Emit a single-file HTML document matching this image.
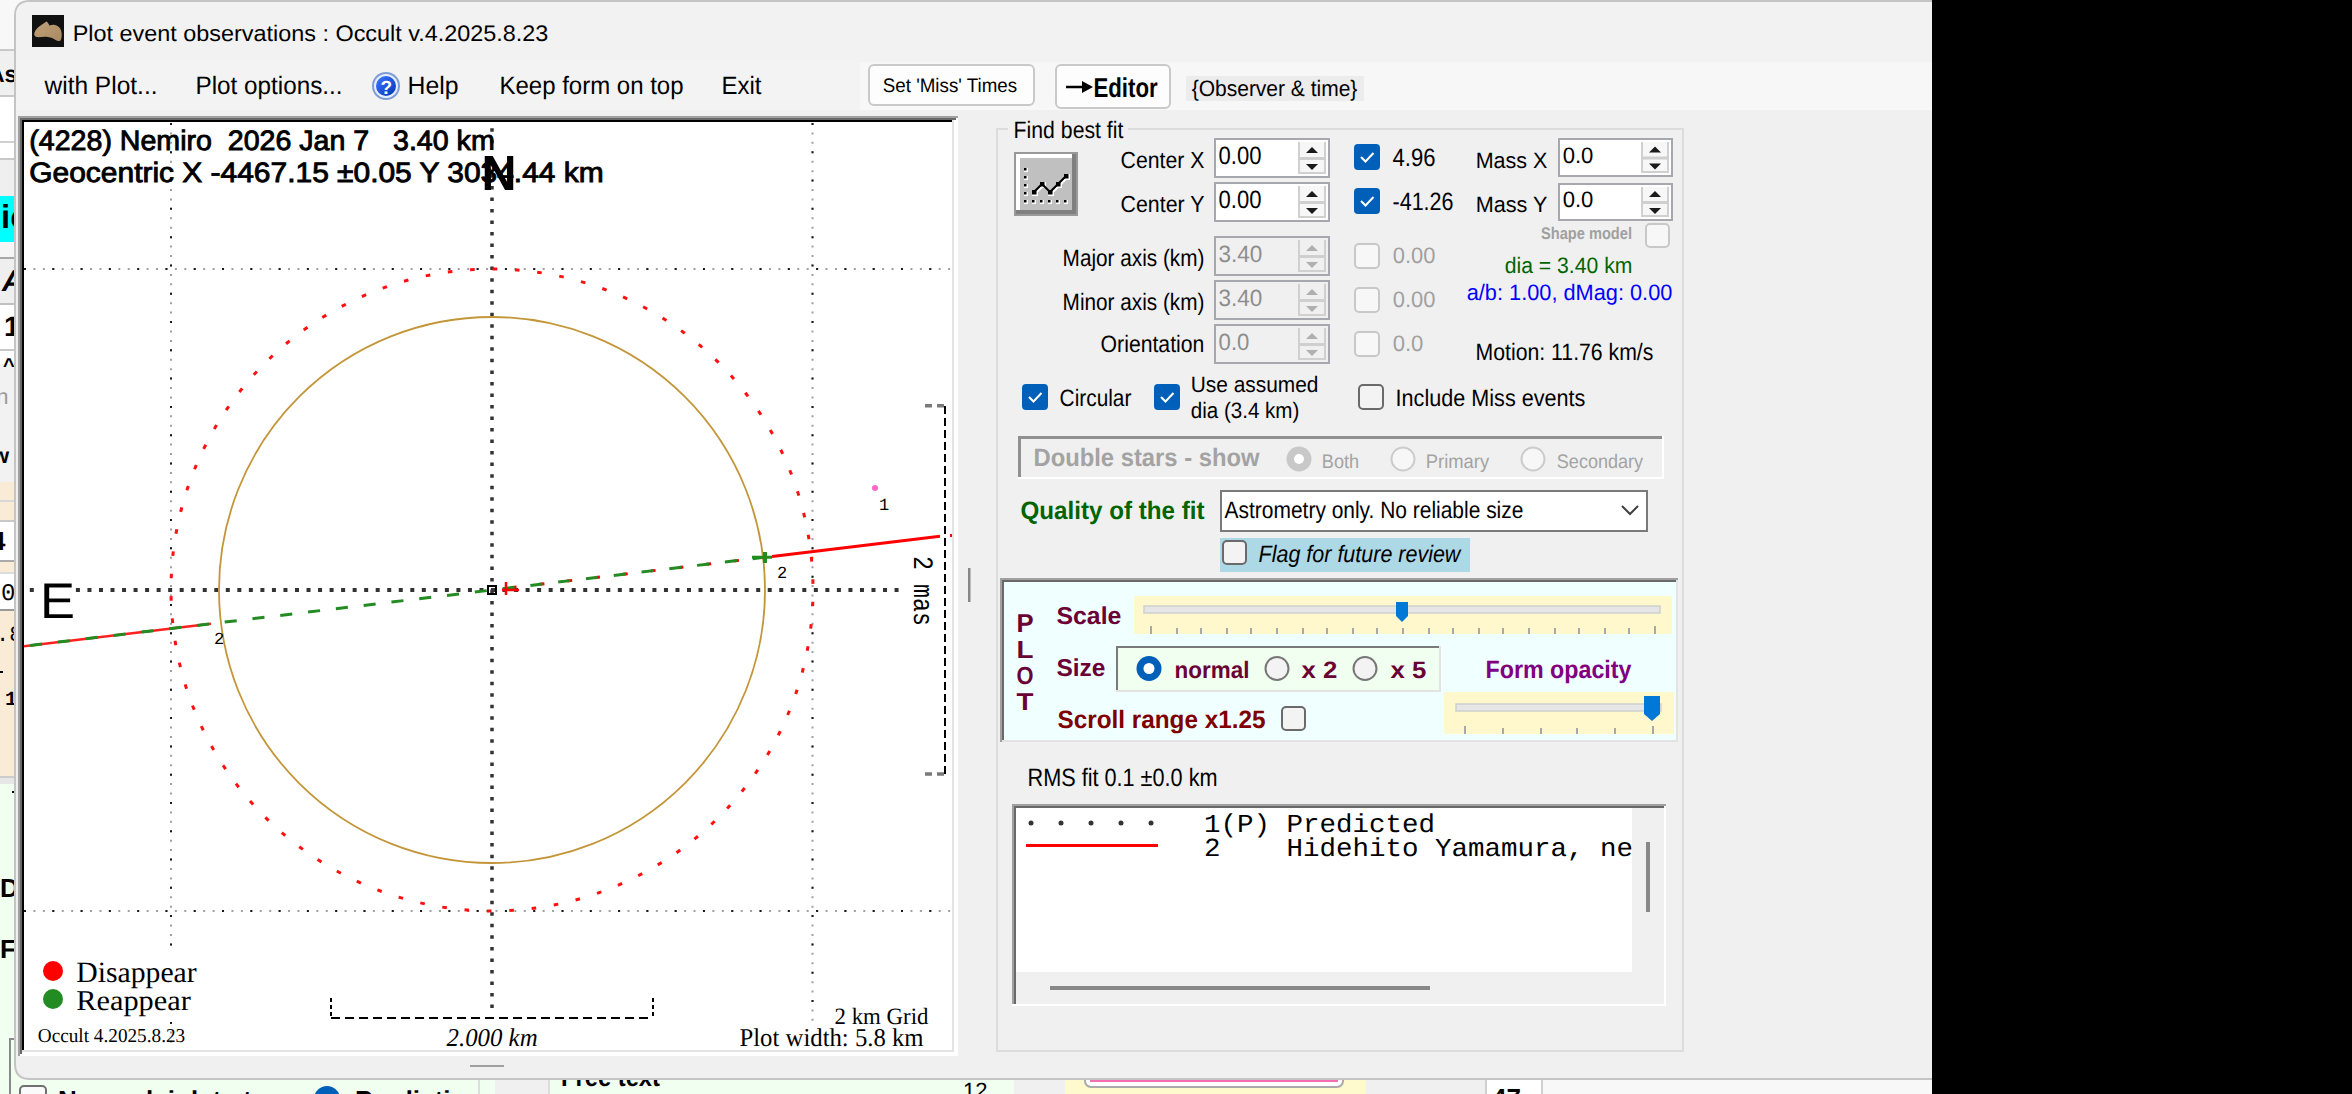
<!DOCTYPE html>
<html><head><meta charset="utf-8"><style>
html,body{margin:0;padding:0;width:2352px;height:1094px;overflow:hidden;background:#000}
svg{display:block}
text{white-space:pre}
</style></head><body>
<svg width="2352" height="1094" viewBox="0 0 2352 1094" text-rendering="geometricPrecision">
<rect x="0" y="0" width="2352" height="1094" fill="#000"/>
<rect x="0" y="0" width="40" height="1094" fill="#f0f0f0"/>
<rect x="0" y="0" width="40" height="50" fill="#f8f8f8"/>
<rect x="0" y="50" width="16" height="46" fill="#f0f0f0"/>
<rect x="0" y="96" width="16" height="63" fill="#ffffff"/>
<rect x="0" y="159" width="16" height="37" fill="#efefef"/>
<rect x="0" y="196" width="16" height="46" fill="#00ffff"/>
<rect x="0" y="242" width="16" height="16" fill="#f5f5f5"/>
<rect x="0" y="258" width="16" height="46" fill="#efefef"/>
<rect x="0" y="304" width="16" height="46" fill="#ffffff"/>
<rect x="0" y="350" width="16" height="14" fill="#ffffff"/>
<rect x="0" y="364" width="16" height="118" fill="#f2f2f2"/>
<rect x="0" y="482" width="16" height="39" fill="#faebd7"/>
<rect x="0" y="521" width="16" height="40" fill="#ffffff"/>
<rect x="0" y="561" width="16" height="12" fill="#faebd7"/>
<rect x="0" y="573" width="16" height="37" fill="#ffffff"/>
<rect x="0" y="610" width="16" height="167" fill="#faebd7"/>
<rect x="0" y="777" width="16" height="7" fill="#e6e6e6"/>
<rect x="0" y="784" width="40" height="310" fill="#f0fff0"/>
<rect x="0" y="49" width="14" height="2" fill="#c8c8c8"/>
<rect x="0" y="95" width="14" height="2" fill="#c8c8c8"/>
<rect x="0" y="141" width="14" height="2" fill="#d0d0d0"/>
<rect x="0" y="158" width="14" height="2" fill="#c8c8c8"/>
<rect x="0" y="257" width="14" height="2" fill="#a8a8a8"/>
<rect x="0" y="303" width="14" height="2" fill="#c0c0c0"/>
<rect x="0" y="349" width="14" height="2" fill="#c8c8c8"/>
<rect x="0" y="500" width="14" height="2" fill="#d8d8d8"/>
<rect x="0" y="520" width="14" height="2" fill="#c8c8c8"/>
<rect x="0" y="560" width="14" height="2" fill="#aaaaaa"/>
<rect x="0" y="572" width="14" height="2" fill="#dddddd"/>
<rect x="0" y="609" width="14" height="2" fill="#999999"/>
<rect x="0" y="776" width="14" height="2" fill="#cccccc"/>
<text x="-12" y="82" font-family="Liberation Sans" font-size="23" fill="#000" font-weight="bold">As</text>
<text x="1" y="228" font-family="Liberation Sans" font-size="33" fill="#000" font-weight="bold">ic</text>
<text x="2" y="291" font-family="Liberation Sans" font-size="30" fill="#000" font-weight="bold" font-style="italic">A</text>
<text x="4" y="336" font-family="Liberation Sans" font-size="28" fill="#000" font-weight="bold">1</text>
<text x="3" y="372" font-family="Liberation Sans" font-size="20" fill="#000" font-weight="bold">^</text>
<text x="-16" y="404" font-family="Liberation Sans" font-size="22" fill="#9a9a9a">en</text>
<text x="-8" y="463" font-family="Liberation Sans" font-size="22" fill="#000" font-weight="bold">w</text>
<text x="-9" y="550" font-family="Liberation Sans" font-size="26" fill="#000" font-weight="bold">4</text>
<text x="1" y="600" font-family="Liberation Mono" font-size="24" fill="#000">0.</text>
<text x="-4" y="641" font-family="Liberation Mono" font-size="22" fill="#000">.8</text>
<rect x="0" y="671" width="3" height="2" fill="#000"/>
<text x="5" y="705" font-family="Liberation Mono" font-size="20" fill="#000" font-weight="bold">1</text>
<rect x="12" y="791" width="4" height="2" fill="#000"/>
<text x="0" y="897" font-family="Liberation Sans" font-size="26" fill="#000" font-weight="bold">D</text>
<text x="0" y="958" font-family="Liberation Sans" font-size="26" fill="#000" font-weight="bold">F</text>
<rect x="0" y="1076" width="1932" height="18" fill="#f0fff0"/>
<rect x="9" y="1038" width="2" height="56" fill="#8a8a8a"/>
<rect x="9" y="1038" width="6" height="2" fill="#8a8a8a"/>
<rect x="20" y="1086" width="26" height="14" fill="#fafafa" stroke="#707070" stroke-width="2" rx="4"/>
<text x="58" y="1109" font-family="Liberation Sans" font-size="26" fill="#000" font-weight="bold">No nuclei data to...</text>
<rect x="314" y="1086" width="26" height="26" fill="#005fb8" rx="13"/>
<text x="355" y="1109" font-family="Liberation Sans" font-size="26" fill="#000" font-weight="bold">Prediction</text>
<rect x="478" y="1076" width="2" height="18" fill="#dddddd"/>
<rect x="495" y="1076" width="54" height="18" fill="#f0f0f0"/>
<rect x="548" y="1076" width="2" height="18" fill="#dddddd"/>
<text x="561" y="1086" font-family="Liberation Sans" font-size="26" fill="#000" font-weight="bold" textLength="99" lengthAdjust="spacingAndGlyphs">Free text</text>
<text x="963" y="1098" font-family="Liberation Sans" font-size="22" fill="#000">12</text>
<rect x="1014" y="1076" width="51" height="18" fill="#f0f0f0"/>
<rect x="1065" y="1076" width="301" height="18" fill="#fffacd"/>
<rect x="1085" y="1066" width="258" height="21" fill="#ffffff" stroke="#aaaaaa" stroke-width="2" rx="6"/>
<rect x="1090" y="1078" width="248" height="4" fill="#f56fb0"/>
<rect x="1366" y="1076" width="119" height="18" fill="#f0f0f0"/>
<rect x="1485" y="1076" width="56" height="18" fill="#ffffff"/>
<rect x="1485" y="1076" width="2" height="18" fill="#d0d0d0"/>
<rect x="1541" y="1076" width="2" height="18" fill="#d0d0d0"/>
<text x="1492" y="1107" font-family="Liberation Sans" font-size="26" fill="#000" font-weight="bold">47</text>
<rect x="1543" y="1076" width="389" height="18" fill="#f8f8f8"/>
<path d="M1932,0 L30,0 Q14,0 14,16 L14,1064 Q14,1080 30,1080 L1932,1080 Z" fill="#c4c4c4"/>
<path d="M1932,2 L30,2 Q16,2 16,16 L16,1064 Q16,1078 30,1078 L1932,1078 Z" fill="#f0f0f0"/>
<path d="M1932,2 L30,2 Q16,2 16,16 L16,62 L1932,62 Z" fill="#f2f2f2"/>
<rect x="16" y="62" width="844" height="48" fill="#f3f3f3"/>
<rect x="860" y="62" width="1072" height="48" fill="#f7f7f7"/>
<rect x="860" y="106" width="1072" height="4" fill="#f8f8f8"/>
<rect x="32" y="15" width="32" height="32" fill="#111111"/>
<defs><linearGradient id="ast" x1="0" y1="0" x2="1" y2="1"><stop offset="0" stop-color="#c0a078"/><stop offset="1" stop-color="#a88a62"/></linearGradient></defs>
<path d="M34.2,34.3 C34.5,31 36,29.5 38,27.5 C41,25 44,23 46.5,21.5 C47.5,21.5 48.5,24 49.5,25.6 C51.5,25 53,24.5 55,25 C58,25.5 60.5,28 61.2,31 C62,34 62,38 60.5,40.6 C59,41.5 57.5,41.2 55.5,40 C53,38.5 50,37 46.5,36.8 C43,36.5 39,37.5 36.5,37 C35,36.5 34.2,35.5 34.2,34.3 Z" fill="url(#ast)"/>
<text x="72.7" y="40.6" font-family="Liberation Sans" font-size="22.49" fill="#000" textLength="475.7" lengthAdjust="spacingAndGlyphs">Plot event observations : Occult v.4.2025.8.23</text>
<text x="44.5" y="94" font-family="Liberation Sans" font-size="25.14" fill="#000" textLength="113.0" lengthAdjust="spacingAndGlyphs">with Plot...</text>
<text x="195.5" y="94" font-family="Liberation Sans" font-size="25.14" fill="#000" textLength="147.0" lengthAdjust="spacingAndGlyphs">Plot options...</text>
<defs><linearGradient id="hb" x1="0" y1="0" x2="1" y2="1"><stop offset="0" stop-color="#3a78ff"/><stop offset="1" stop-color="#0632b8"/></linearGradient></defs>
<circle cx="386" cy="86" r="14" fill="#7f9cd8"/>
<circle cx="386" cy="86" r="12" fill="#e6eeff"/>
<circle cx="386" cy="86" r="10" fill="url(#hb)"/>
<text x="380.5" y="94" font-family="Liberation Sans" font-size="19" fill="#ffffff" font-weight="bold">?</text>
<text x="407.5" y="94" font-family="Liberation Sans" font-size="25.14" fill="#000" textLength="51.0" lengthAdjust="spacingAndGlyphs">Help</text>
<text x="499.5" y="94" font-family="Liberation Sans" font-size="25.14" fill="#000" textLength="184.0" lengthAdjust="spacingAndGlyphs">Keep form on top</text>
<text x="721.5" y="94" font-family="Liberation Sans" font-size="25.14" fill="#000" textLength="40.0" lengthAdjust="spacingAndGlyphs">Exit</text>
<rect x="869" y="65" width="165" height="40" fill="#fdfdfd" stroke="#c9c9c9" stroke-width="2" rx="5"/>
<text x="882.8" y="92" font-family="Liberation Sans" font-size="19.55" fill="#000" textLength="134.3" lengthAdjust="spacingAndGlyphs">Set 'Miss' Times</text>
<rect x="1056" y="65" width="114" height="43" fill="#fdfdfd" stroke="#c9c9c9" stroke-width="2" rx="5"/>
<path d="M1066,87 L1086,87" stroke="#000" stroke-width="2.5"/><path d="M1082,81 L1093,87 L1082,93 Z" fill="#000"/>
<text x="1093.4" y="97" font-family="Liberation Sans" font-size="27.23" fill="#000" font-weight="bold" textLength="64.3" lengthAdjust="spacingAndGlyphs">Editor</text>
<rect x="1186" y="76" width="178" height="25" fill="#ececec"/>
<text x="1191.7" y="96" font-family="Liberation Sans" font-size="22.35" fill="#000" textLength="165.7" lengthAdjust="spacingAndGlyphs">{Observer &amp; time}</text>
<rect x="18" y="116" width="940" height="940" fill="#ffffff"/>
<rect x="18" y="116" width="940" height="2" fill="#a0a0a0"/>
<rect x="18" y="116" width="2" height="940" fill="#a0a0a0"/>
<rect x="20" y="118" width="936" height="2" fill="#696969"/>
<rect x="20" y="118" width="2" height="936" fill="#696969"/>
<rect x="22" y="120" width="930" height="2" fill="#000000"/>
<rect x="22" y="120" width="2" height="930" fill="#000000"/>
<rect x="952" y="120" width="2" height="932" fill="#e3e3e3"/>
<rect x="22" y="1050" width="932" height="2" fill="#e3e3e3"/>
<svg x="24" y="122" width="928" height="928" viewBox="24 122 928 928" overflow="hidden">
<line x1="171" y1="123" x2="171" y2="952" stroke="#a0a0a0" stroke-width="2" stroke-dasharray="2 7.43"/>
<line x1="171" y1="123" x2="171" y2="952" stroke="#1a1a1a" stroke-width="2" stroke-dasharray="2 26.29"/>
<line x1="171" y1="1022" x2="171" y2="1050" stroke="#a0a0a0" stroke-width="2" stroke-dasharray="2 7.43"/>
<line x1="171" y1="1022" x2="171" y2="1050" stroke="#1a1a1a" stroke-width="2" stroke-dasharray="2 26.29"/>
<line x1="812.5" y1="123" x2="812.5" y2="1026" stroke="#a0a0a0" stroke-width="2" stroke-dasharray="2 7.43"/>
<line x1="812.5" y1="123" x2="812.5" y2="1026" stroke="#1a1a1a" stroke-width="2" stroke-dasharray="2 26.29"/>
<line x1="24" y1="269" x2="952" y2="269" stroke="#a0a0a0" stroke-width="2" stroke-dasharray="2 7.43"/>
<line x1="24" y1="269" x2="952" y2="269" stroke="#1a1a1a" stroke-width="2" stroke-dasharray="2 26.29"/>
<line x1="24" y1="911" x2="952" y2="911" stroke="#a0a0a0" stroke-width="2" stroke-dasharray="2 7.43"/>
<line x1="24" y1="911" x2="952" y2="911" stroke="#1a1a1a" stroke-width="2" stroke-dasharray="2 26.29"/>
<line x1="492" y1="128.25" x2="492" y2="1016" stroke="#333" stroke-width="3.5" stroke-dasharray="3.5 8.03"/>
<line x1="29.8" y1="590" x2="906" y2="590" stroke="#333" stroke-width="3.8" stroke-dasharray="4 7.53"/>
<line x1="492.5" y1="268.99" x2="497.1" y2="269.03" stroke="#ff1010" stroke-width="3"/>
<line x1="514.89" y1="269.81" x2="519.48" y2="270.17" stroke="#ff1010" stroke-width="3"/>
<line x1="537.17" y1="272.19" x2="541.72" y2="272.87" stroke="#ff1010" stroke-width="3"/>
<line x1="559.23" y1="276.11" x2="563.72" y2="277.11" stroke="#ff1010" stroke-width="3"/>
<line x1="580.96" y1="281.57" x2="585.37" y2="282.87" stroke="#ff1010" stroke-width="3"/>
<line x1="602.26" y1="288.52" x2="606.57" y2="290.13" stroke="#ff1010" stroke-width="3"/>
<line x1="623.02" y1="296.95" x2="627.21" y2="298.86" stroke="#ff1010" stroke-width="3"/>
<line x1="643.15" y1="306.8" x2="647.19" y2="309.0" stroke="#ff1010" stroke-width="3"/>
<line x1="662.53" y1="318.04" x2="666.41" y2="320.51" stroke="#ff1010" stroke-width="3"/>
<line x1="681.09" y1="330.59" x2="684.79" y2="333.33" stroke="#ff1010" stroke-width="3"/>
<line x1="698.72" y1="344.42" x2="702.22" y2="347.4" stroke="#ff1010" stroke-width="3"/>
<line x1="715.35" y1="359.43" x2="718.63" y2="362.66" stroke="#ff1010" stroke-width="3"/>
<line x1="730.89" y1="375.58" x2="733.94" y2="379.02" stroke="#ff1010" stroke-width="3"/>
<line x1="745.27" y1="392.76" x2="748.07" y2="396.41" stroke="#ff1010" stroke-width="3"/>
<line x1="758.41" y1="410.91" x2="760.95" y2="414.75" stroke="#ff1010" stroke-width="3"/>
<line x1="770.25" y1="429.93" x2="772.52" y2="433.93" stroke="#ff1010" stroke-width="3"/>
<line x1="780.74" y1="449.73" x2="782.72" y2="453.88" stroke="#ff1010" stroke-width="3"/>
<line x1="789.82" y1="470.21" x2="791.51" y2="474.49" stroke="#ff1010" stroke-width="3"/>
<line x1="797.45" y1="491.28" x2="798.83" y2="495.67" stroke="#ff1010" stroke-width="3"/>
<line x1="803.59" y1="512.83" x2="804.67" y2="517.3" stroke="#ff1010" stroke-width="3"/>
<line x1="808.22" y1="534.75" x2="808.98" y2="539.29" stroke="#ff1010" stroke-width="3"/>
<line x1="811.3" y1="556.94" x2="811.74" y2="561.52" stroke="#ff1010" stroke-width="3"/>
<line x1="812.83" y1="579.3" x2="812.95" y2="583.9" stroke="#ff1010" stroke-width="3"/>
<line x1="812.79" y1="601.7" x2="812.59" y2="606.3" stroke="#ff1010" stroke-width="3"/>
<line x1="811.2" y1="624.05" x2="810.68" y2="628.62" stroke="#ff1010" stroke-width="3"/>
<line x1="808.04" y1="646.24" x2="807.21" y2="650.76" stroke="#ff1010" stroke-width="3"/>
<line x1="803.35" y1="668.15" x2="802.2" y2="672.6" stroke="#ff1010" stroke-width="3"/>
<line x1="797.14" y1="689.67" x2="795.68" y2="694.04" stroke="#ff1010" stroke-width="3"/>
<line x1="789.45" y1="710.72" x2="787.69" y2="714.97" stroke="#ff1010" stroke-width="3"/>
<line x1="780.3" y1="731.17" x2="778.25" y2="735.29" stroke="#ff1010" stroke-width="3"/>
<line x1="769.75" y1="750.94" x2="767.42" y2="754.9" stroke="#ff1010" stroke-width="3"/>
<line x1="757.85" y1="769.92" x2="755.24" y2="773.71" stroke="#ff1010" stroke-width="3"/>
<line x1="744.65" y1="788.03" x2="741.79" y2="791.63" stroke="#ff1010" stroke-width="3"/>
<line x1="730.22" y1="805.17" x2="727.11" y2="808.56" stroke="#ff1010" stroke-width="3"/>
<line x1="714.63" y1="821.26" x2="711.29" y2="824.43" stroke="#ff1010" stroke-width="3"/>
<line x1="697.96" y1="836.23" x2="694.41" y2="839.15" stroke="#ff1010" stroke-width="3"/>
<line x1="680.28" y1="850.0" x2="676.53" y2="852.67" stroke="#ff1010" stroke-width="3"/>
<line x1="661.68" y1="862.5" x2="657.76" y2="864.9" stroke="#ff1010" stroke-width="3"/>
<line x1="642.26" y1="873.67" x2="638.18" y2="875.79" stroke="#ff1010" stroke-width="3"/>
<line x1="622.11" y1="883.46" x2="617.89" y2="885.29" stroke="#ff1010" stroke-width="3"/>
<line x1="601.32" y1="891.82" x2="596.98" y2="893.36" stroke="#ff1010" stroke-width="3"/>
<line x1="580.0" y1="898.71" x2="575.57" y2="899.94" stroke="#ff1010" stroke-width="3"/>
<line x1="558.25" y1="904.1" x2="553.74" y2="905.01" stroke="#ff1010" stroke-width="3"/>
<line x1="536.18" y1="907.95" x2="531.62" y2="908.55" stroke="#ff1010" stroke-width="3"/>
<line x1="513.89" y1="910.26" x2="509.3" y2="910.54" stroke="#ff1010" stroke-width="3"/>
<line x1="491.5" y1="911.01" x2="486.9" y2="910.97" stroke="#ff1010" stroke-width="3"/>
<line x1="469.11" y1="910.19" x2="464.52" y2="909.83" stroke="#ff1010" stroke-width="3"/>
<line x1="446.83" y1="907.81" x2="442.28" y2="907.13" stroke="#ff1010" stroke-width="3"/>
<line x1="424.77" y1="903.89" x2="420.28" y2="902.89" stroke="#ff1010" stroke-width="3"/>
<line x1="403.04" y1="898.43" x2="398.63" y2="897.13" stroke="#ff1010" stroke-width="3"/>
<line x1="381.74" y1="891.48" x2="377.43" y2="889.87" stroke="#ff1010" stroke-width="3"/>
<line x1="360.98" y1="883.05" x2="356.79" y2="881.14" stroke="#ff1010" stroke-width="3"/>
<line x1="340.85" y1="873.2" x2="336.81" y2="871.0" stroke="#ff1010" stroke-width="3"/>
<line x1="321.47" y1="861.96" x2="317.59" y2="859.49" stroke="#ff1010" stroke-width="3"/>
<line x1="302.91" y1="849.41" x2="299.21" y2="846.67" stroke="#ff1010" stroke-width="3"/>
<line x1="285.28" y1="835.58" x2="281.78" y2="832.6" stroke="#ff1010" stroke-width="3"/>
<line x1="268.65" y1="820.57" x2="265.37" y2="817.34" stroke="#ff1010" stroke-width="3"/>
<line x1="253.11" y1="804.42" x2="250.06" y2="800.98" stroke="#ff1010" stroke-width="3"/>
<line x1="238.73" y1="787.24" x2="235.93" y2="783.59" stroke="#ff1010" stroke-width="3"/>
<line x1="225.59" y1="769.09" x2="223.05" y2="765.25" stroke="#ff1010" stroke-width="3"/>
<line x1="213.75" y1="750.07" x2="211.48" y2="746.07" stroke="#ff1010" stroke-width="3"/>
<line x1="203.26" y1="730.27" x2="201.28" y2="726.12" stroke="#ff1010" stroke-width="3"/>
<line x1="194.18" y1="709.79" x2="192.49" y2="705.51" stroke="#ff1010" stroke-width="3"/>
<line x1="186.55" y1="688.72" x2="185.17" y2="684.33" stroke="#ff1010" stroke-width="3"/>
<line x1="180.41" y1="667.17" x2="179.33" y2="662.7" stroke="#ff1010" stroke-width="3"/>
<line x1="175.78" y1="645.25" x2="175.02" y2="640.71" stroke="#ff1010" stroke-width="3"/>
<line x1="172.7" y1="623.06" x2="172.26" y2="618.48" stroke="#ff1010" stroke-width="3"/>
<line x1="171.17" y1="600.7" x2="171.05" y2="596.1" stroke="#ff1010" stroke-width="3"/>
<line x1="171.21" y1="578.3" x2="171.41" y2="573.7" stroke="#ff1010" stroke-width="3"/>
<line x1="172.8" y1="555.95" x2="173.32" y2="551.38" stroke="#ff1010" stroke-width="3"/>
<line x1="175.96" y1="533.76" x2="176.79" y2="529.24" stroke="#ff1010" stroke-width="3"/>
<line x1="180.65" y1="511.85" x2="181.8" y2="507.4" stroke="#ff1010" stroke-width="3"/>
<line x1="186.86" y1="490.33" x2="188.32" y2="485.96" stroke="#ff1010" stroke-width="3"/>
<line x1="194.55" y1="469.28" x2="196.31" y2="465.03" stroke="#ff1010" stroke-width="3"/>
<line x1="203.7" y1="448.83" x2="205.75" y2="444.71" stroke="#ff1010" stroke-width="3"/>
<line x1="214.25" y1="429.06" x2="216.58" y2="425.1" stroke="#ff1010" stroke-width="3"/>
<line x1="226.15" y1="410.08" x2="228.76" y2="406.29" stroke="#ff1010" stroke-width="3"/>
<line x1="239.35" y1="391.97" x2="242.21" y2="388.37" stroke="#ff1010" stroke-width="3"/>
<line x1="253.78" y1="374.83" x2="256.89" y2="371.44" stroke="#ff1010" stroke-width="3"/>
<line x1="269.37" y1="358.74" x2="272.71" y2="355.57" stroke="#ff1010" stroke-width="3"/>
<line x1="286.04" y1="343.77" x2="289.59" y2="340.85" stroke="#ff1010" stroke-width="3"/>
<line x1="303.72" y1="330.0" x2="307.47" y2="327.33" stroke="#ff1010" stroke-width="3"/>
<line x1="322.32" y1="317.5" x2="326.24" y2="315.1" stroke="#ff1010" stroke-width="3"/>
<line x1="341.74" y1="306.33" x2="345.82" y2="304.21" stroke="#ff1010" stroke-width="3"/>
<line x1="361.89" y1="296.54" x2="366.11" y2="294.71" stroke="#ff1010" stroke-width="3"/>
<line x1="382.68" y1="288.18" x2="387.02" y2="286.64" stroke="#ff1010" stroke-width="3"/>
<line x1="404.0" y1="281.29" x2="408.43" y2="280.06" stroke="#ff1010" stroke-width="3"/>
<line x1="425.75" y1="275.9" x2="430.26" y2="274.99" stroke="#ff1010" stroke-width="3"/>
<line x1="447.82" y1="272.05" x2="452.38" y2="271.45" stroke="#ff1010" stroke-width="3"/>
<line x1="470.11" y1="269.74" x2="474.7" y2="269.46" stroke="#ff1010" stroke-width="3"/>
<circle cx="492" cy="590" r="273" fill="none" stroke="#c4963a" stroke-width="1.8"/>
<line x1="24" y1="646.16" x2="211" y2="623.72" stroke="#ff2020" stroke-width="2.5"/>
<line x1="30.160000000000025" y1="645.4208" x2="42.160000000000025" y2="643.9808" stroke="#228b22" stroke-width="3"/>
<line x1="57.950000000000045" y1="642.086" x2="69.95000000000005" y2="640.646" stroke="#228b22" stroke-width="3"/>
<line x1="85.74000000000001" y1="638.7512" x2="97.74000000000001" y2="637.3112" stroke="#228b22" stroke-width="3"/>
<line x1="113.53000000000003" y1="635.4164" x2="125.53000000000003" y2="633.9764" stroke="#228b22" stroke-width="3"/>
<line x1="141.32" y1="632.0816" x2="153.32" y2="630.6416" stroke="#228b22" stroke-width="3"/>
<line x1="169.11" y1="628.7468" x2="181.11" y2="627.3068" stroke="#228b22" stroke-width="3"/>
<line x1="196.90000000000003" y1="625.412" x2="208.90000000000003" y2="623.972" stroke="#228b22" stroke-width="3"/>
<line x1="224.69000000000003" y1="622.0772" x2="236.69000000000003" y2="620.6372" stroke="#228b22" stroke-width="3"/>
<line x1="252.48000000000002" y1="618.7424" x2="264.48" y2="617.3024" stroke="#228b22" stroke-width="3"/>
<line x1="280.27" y1="615.4076" x2="292.27" y2="613.9676" stroke="#228b22" stroke-width="3"/>
<line x1="308.06" y1="612.0728" x2="320.06" y2="610.6328" stroke="#228b22" stroke-width="3"/>
<line x1="335.85" y1="608.7379999999999" x2="347.85" y2="607.298" stroke="#228b22" stroke-width="3"/>
<line x1="363.64" y1="605.4032" x2="375.64" y2="603.9632" stroke="#228b22" stroke-width="3"/>
<line x1="391.43" y1="602.0684" x2="403.43" y2="600.6284" stroke="#228b22" stroke-width="3"/>
<line x1="419.22" y1="598.7336" x2="431.22" y2="597.2936" stroke="#228b22" stroke-width="3"/>
<line x1="447.01" y1="595.3988" x2="459.01" y2="593.9588" stroke="#228b22" stroke-width="3"/>
<line x1="474.8" y1="592.064" x2="486.8" y2="590.624" stroke="#228b22" stroke-width="3"/>
<line x1="511.59000000000003" y1="587.6492" x2="516.59" y2="587.0492" stroke="#ff0000" stroke-width="3"/>
<line x1="502.59000000000003" y1="588.7292" x2="514.59" y2="587.2892" stroke="#228b22" stroke-width="3"/>
<line x1="539.38" y1="584.3144" x2="544.38" y2="583.7144" stroke="#ff0000" stroke-width="3"/>
<line x1="530.38" y1="585.3944" x2="542.38" y2="583.9544" stroke="#228b22" stroke-width="3"/>
<line x1="567.1700000000001" y1="580.9796" x2="572.1700000000001" y2="580.3796" stroke="#ff0000" stroke-width="3"/>
<line x1="558.1700000000001" y1="582.0596" x2="570.1700000000001" y2="580.6196" stroke="#228b22" stroke-width="3"/>
<line x1="594.96" y1="577.6448" x2="599.96" y2="577.0448" stroke="#ff0000" stroke-width="3"/>
<line x1="585.96" y1="578.7248" x2="597.96" y2="577.2848" stroke="#228b22" stroke-width="3"/>
<line x1="622.75" y1="574.31" x2="627.75" y2="573.71" stroke="#ff0000" stroke-width="3"/>
<line x1="613.75" y1="575.39" x2="625.75" y2="573.95" stroke="#228b22" stroke-width="3"/>
<line x1="650.54" y1="570.9752" x2="655.54" y2="570.3752" stroke="#ff0000" stroke-width="3"/>
<line x1="641.54" y1="572.0552" x2="653.54" y2="570.6152" stroke="#228b22" stroke-width="3"/>
<line x1="678.33" y1="567.6404" x2="683.33" y2="567.0404" stroke="#ff0000" stroke-width="3"/>
<line x1="669.33" y1="568.7204" x2="681.33" y2="567.2804" stroke="#228b22" stroke-width="3"/>
<line x1="706.12" y1="564.3056" x2="711.12" y2="563.7056" stroke="#ff0000" stroke-width="3"/>
<line x1="697.12" y1="565.3856" x2="709.12" y2="563.9456" stroke="#228b22" stroke-width="3"/>
<line x1="733.91" y1="560.9708" x2="738.91" y2="560.3708" stroke="#ff0000" stroke-width="3"/>
<line x1="724.91" y1="562.0508" x2="736.91" y2="560.6108" stroke="#228b22" stroke-width="3"/>
<line x1="761.7" y1="557.636" x2="766.7" y2="557.036" stroke="#ff0000" stroke-width="3"/>
<line x1="752.7" y1="558.716" x2="764.7" y2="557.276" stroke="#228b22" stroke-width="3"/>
<line x1="772" y1="556.4" x2="940" y2="536.24" stroke="#ff0000" stroke-width="3"/>
<line x1="765" y1="552" x2="765" y2="563" stroke="#228b22" stroke-width="4"/>
<line x1="752" y1="557.24" x2="772" y2="557.24" stroke="#228b22" stroke-width="3"/>
<rect x="488" y="586" width="8" height="8" fill="none" stroke="#000" stroke-width="2"/>
<line x1="506" y1="582" x2="506" y2="595" stroke="#ff0000" stroke-width="2.5"/>
<line x1="502" y1="590" x2="519" y2="590" stroke="#ff0000" stroke-width="2.5"/>
<rect x="950" y="534" width="3" height="3" fill="#ff0000"/>
<circle cx="875" cy="488" r="3" fill="#ff69c8"/>
<text x="879" y="510" font-family="Liberation Mono" font-size="17" fill="#000">1</text>
<text x="777" y="578" font-family="Liberation Mono" font-size="17" fill="#000">2</text>
<text x="214" y="644" font-family="Liberation Mono" font-size="17" fill="#000">2</text>
<line x1="945" y1="406" x2="945" y2="774" stroke="#000" stroke-width="2" stroke-dasharray="8 4"/>
<line x1="925" y1="405.8" x2="945" y2="405.8" stroke="#7a7a7a" stroke-width="3.4" stroke-dasharray="7 5"/>
<line x1="925" y1="774" x2="945" y2="774" stroke="#7a7a7a" stroke-width="3.4" stroke-dasharray="7 5"/>
<text x="0" y="0" transform="translate(913.5,556) rotate(90)" font-family="Liberation Mono" font-size="28" fill="#000" textLength="70" lengthAdjust="spacingAndGlyphs">2 mas</text>
<line x1="331" y1="998" x2="331" y2="1018" stroke="#000" stroke-width="2" stroke-dasharray="4 3"/>
<line x1="653" y1="998" x2="653" y2="1018" stroke="#000" stroke-width="2" stroke-dasharray="4 3"/>
<line x1="331" y1="1018" x2="653" y2="1018" stroke="#000" stroke-width="2" stroke-dasharray="9 5"/>
</svg>
<text x="29.3" y="150" font-family="Liberation Sans" font-size="27.93" fill="#000" textLength="465.4" lengthAdjust="spacingAndGlyphs" stroke="#000" stroke-width="0.9">(4228) Nemiro  2026 Jan 7   3.40 km</text>
<text x="29.3" y="181.5" font-family="Liberation Sans" font-size="27.93" fill="#000" textLength="574.4" lengthAdjust="spacingAndGlyphs" stroke="#000" stroke-width="0.9">Geocentric X -4467.15 ±0.05 Y 3034.44 km</text>
<rect x="484" y="150" width="30" height="6" fill="#ffffff"/>
<text x="481.5" y="190" font-family="Liberation Sans" font-size="49.5" fill="#000" font-weight="bold" textLength="35" lengthAdjust="spacingAndGlyphs">N</text>
<rect x="37" y="578" width="38" height="44" fill="#ffffff"/>
<text x="40" y="618" font-family="Liberation Sans" font-size="50" fill="#000" textLength="35" lengthAdjust="spacingAndGlyphs">E</text>
<circle cx="53" cy="971" r="10" fill="#ff0000"/>
<circle cx="53" cy="999" r="10" fill="#228b22"/>
<text x="76.2" y="982" font-family="Liberation Serif" font-size="29.55" fill="#000" textLength="120.5" lengthAdjust="spacingAndGlyphs">Disappear</text>
<text x="76.3" y="1009.5" font-family="Liberation Serif" font-size="28.79" fill="#000" textLength="114.5" lengthAdjust="spacingAndGlyphs">Reappear</text>
<text x="37.8" y="1042" font-family="Liberation Serif" font-size="19.7" fill="#000" textLength="147.4" lengthAdjust="spacingAndGlyphs">Occult 4.2025.8.23</text>
<text x="446.5" y="1045.5" font-family="Liberation Serif" font-size="25.76" fill="#000" font-style="italic" textLength="91.1" lengthAdjust="spacingAndGlyphs">2.000 km</text>
<text x="834.6" y="1024" font-family="Liberation Serif" font-size="23.48" fill="#000" textLength="93.8" lengthAdjust="spacingAndGlyphs">2 km Grid</text>
<text x="739.5" y="1045.5" font-family="Liberation Serif" font-size="25.76" fill="#000" textLength="184.1" lengthAdjust="spacingAndGlyphs">Plot width: 5.8 km</text>
<rect x="470" y="1065" width="34" height="2" fill="#a0a0a0"/>
<rect x="968" y="568" width="2.5" height="34" fill="#888888"/>
<rect x="997" y="129" width="686" height="922" fill="none" stroke="#dcdcdc" stroke-width="2"/>
<rect x="1008" y="118" width="120" height="22" fill="#f0f0f0"/>
<text x="1013.6" y="138" font-family="Liberation Sans" font-size="23.74" fill="#000" textLength="109.8" lengthAdjust="spacingAndGlyphs">Find best fit</text>
<rect x="1014" y="152" width="64" height="64" fill="#999999"/>
<rect x="1016" y="154" width="60" height="60" fill="#808080"/>
<rect x="1016" y="154" width="56" height="56" fill="#ffffff"/>
<rect x="1020" y="158" width="52" height="52" fill="#c0c0c0"/>
<rect x="1024" y="168" width="4" height="4" fill="#ffffff"/>
<rect x="1024" y="168" width="2.5" height="2.5" fill="#000"/>
<rect x="1024" y="176" width="4" height="4" fill="#ffffff"/>
<rect x="1024" y="176" width="2.5" height="2.5" fill="#000"/>
<rect x="1024" y="184" width="4" height="4" fill="#ffffff"/>
<rect x="1024" y="184" width="2.5" height="2.5" fill="#000"/>
<rect x="1024" y="192" width="4" height="4" fill="#ffffff"/>
<rect x="1024" y="192" width="2.5" height="2.5" fill="#000"/>
<rect x="1024" y="200" width="4" height="4" fill="#ffffff"/>
<rect x="1024" y="200" width="2.5" height="2.5" fill="#000"/>
<rect x="1024" y="200" width="4" height="4" fill="#ffffff"/>
<rect x="1024" y="200" width="2.5" height="2.5" fill="#000"/>
<rect x="1032" y="200" width="4" height="4" fill="#ffffff"/>
<rect x="1032" y="200" width="2.5" height="2.5" fill="#000"/>
<rect x="1040" y="200" width="4" height="4" fill="#ffffff"/>
<rect x="1040" y="200" width="2.5" height="2.5" fill="#000"/>
<rect x="1048" y="200" width="4" height="4" fill="#ffffff"/>
<rect x="1048" y="200" width="2.5" height="2.5" fill="#000"/>
<rect x="1056" y="200" width="4" height="4" fill="#ffffff"/>
<rect x="1056" y="200" width="2.5" height="2.5" fill="#000"/>
<rect x="1064" y="200" width="4" height="4" fill="#ffffff"/>
<rect x="1064" y="200" width="2.5" height="2.5" fill="#000"/>
<rect x="1032" y="190" width="6" height="6" fill="#ffffff"/>
<rect x="1040" y="182" width="6" height="6" fill="#ffffff"/>
<rect x="1048" y="190" width="6" height="6" fill="#ffffff"/>
<rect x="1056" y="182" width="6" height="6" fill="#ffffff"/>
<rect x="1064" y="174" width="6" height="6" fill="#ffffff"/>
<polyline points="1034,192 1042,184 1050,192 1058,184 1066,176" fill="none" stroke="#ffffff" stroke-width="2" transform="translate(1.5,1.5)"/>
<polyline points="1034,192 1042,184 1050,192 1058,184 1066,176" fill="none" stroke="#000" stroke-width="2"/>
<rect x="1032" y="190" width="4.5" height="4.5" fill="#000"/>
<rect x="1040" y="182" width="4.5" height="4.5" fill="#000"/>
<rect x="1048" y="190" width="4.5" height="4.5" fill="#000"/>
<rect x="1056" y="182" width="4.5" height="4.5" fill="#000"/>
<rect x="1064" y="174" width="4.5" height="4.5" fill="#000"/>
<rect x="1215" y="139" width="114" height="38" fill="#ffffff" stroke="#a6a8ae" stroke-width="2"/>
<rect x="1298" y="142" width="28" height="32" fill="#f7f7f7"/>
<rect x="1298" y="142" width="2" height="32" fill="#d0d0d0"/>
<rect x="1324" y="142" width="2" height="32" fill="#d0d0d0"/>
<rect x="1298" y="157.0" width="28" height="3" fill="#cfcfcf"/>
<rect x="1298" y="172" width="28" height="2" fill="#d0d0d0"/>
<path d="M1306,153.0 L1318,153.0 L1312,147.0 Z" fill="#1a1a1a"/>
<path d="M1306,164.0 L1318,164.0 L1312,170.0 Z" fill="#1a1a1a"/>
<text x="1218.5" y="164" font-family="Liberation Sans" font-size="25.14" fill="#000" textLength="43.0" lengthAdjust="spacingAndGlyphs">0.00</text>
<rect x="1215" y="183" width="114" height="38" fill="#ffffff" stroke="#a6a8ae" stroke-width="2"/>
<rect x="1298" y="186" width="28" height="32" fill="#f7f7f7"/>
<rect x="1298" y="186" width="2" height="32" fill="#d0d0d0"/>
<rect x="1324" y="186" width="2" height="32" fill="#d0d0d0"/>
<rect x="1298" y="201.0" width="28" height="3" fill="#cfcfcf"/>
<rect x="1298" y="216" width="28" height="2" fill="#d0d0d0"/>
<path d="M1306,197.0 L1318,197.0 L1312,191.0 Z" fill="#1a1a1a"/>
<path d="M1306,208.0 L1318,208.0 L1312,214.0 Z" fill="#1a1a1a"/>
<text x="1218.5" y="208" font-family="Liberation Sans" font-size="25.14" fill="#000" textLength="43.0" lengthAdjust="spacingAndGlyphs">0.00</text>
<rect x="1215" y="237" width="114" height="38" fill="#f0f0f0" stroke="#a6a8ae" stroke-width="2"/>
<rect x="1298" y="240" width="28" height="32" fill="#f0f0f0"/>
<rect x="1298" y="240" width="2" height="32" fill="#d0d0d0"/>
<rect x="1324" y="240" width="2" height="32" fill="#d0d0d0"/>
<rect x="1298" y="255.0" width="28" height="3" fill="#cfcfcf"/>
<rect x="1298" y="270" width="28" height="2" fill="#d0d0d0"/>
<path d="M1306,251.0 L1318,251.0 L1312,245.0 Z" fill="#b0b0b0"/>
<path d="M1306,262.0 L1318,262.0 L1312,268.0 Z" fill="#b0b0b0"/>
<text x="1218.6" y="262" font-family="Liberation Sans" font-size="23.74" fill="#8d8d8d" textLength="43.8" lengthAdjust="spacingAndGlyphs">3.40</text>
<rect x="1215" y="281" width="114" height="38" fill="#f0f0f0" stroke="#a6a8ae" stroke-width="2"/>
<rect x="1298" y="284" width="28" height="32" fill="#f0f0f0"/>
<rect x="1298" y="284" width="2" height="32" fill="#d0d0d0"/>
<rect x="1324" y="284" width="2" height="32" fill="#d0d0d0"/>
<rect x="1298" y="299.0" width="28" height="3" fill="#cfcfcf"/>
<rect x="1298" y="314" width="28" height="2" fill="#d0d0d0"/>
<path d="M1306,295.0 L1318,295.0 L1312,289.0 Z" fill="#b0b0b0"/>
<path d="M1306,306.0 L1318,306.0 L1312,312.0 Z" fill="#b0b0b0"/>
<text x="1218.6" y="306" font-family="Liberation Sans" font-size="23.74" fill="#8d8d8d" textLength="43.8" lengthAdjust="spacingAndGlyphs">3.40</text>
<rect x="1215" y="325" width="114" height="38" fill="#f0f0f0" stroke="#a6a8ae" stroke-width="2"/>
<rect x="1298" y="328" width="28" height="32" fill="#f0f0f0"/>
<rect x="1298" y="328" width="2" height="32" fill="#d0d0d0"/>
<rect x="1324" y="328" width="2" height="32" fill="#d0d0d0"/>
<rect x="1298" y="343.0" width="28" height="3" fill="#cfcfcf"/>
<rect x="1298" y="358" width="28" height="2" fill="#d0d0d0"/>
<path d="M1306,339.0 L1318,339.0 L1312,333.0 Z" fill="#b0b0b0"/>
<path d="M1306,350.0 L1318,350.0 L1312,356.0 Z" fill="#b0b0b0"/>
<text x="1218.6" y="350" font-family="Liberation Sans" font-size="23.74" fill="#8d8d8d" textLength="30.8" lengthAdjust="spacingAndGlyphs">0.0</text>
<text x="1120.6" y="167.6" font-family="Liberation Sans" font-size="23.18" fill="#000" textLength="83.8" lengthAdjust="spacingAndGlyphs">Center X</text>
<text x="1120.6" y="212" font-family="Liberation Sans" font-size="23.18" fill="#000" textLength="83.8" lengthAdjust="spacingAndGlyphs">Center Y</text>
<text x="1062.6" y="266" font-family="Liberation Sans" font-size="23.74" fill="#000" textLength="141.8" lengthAdjust="spacingAndGlyphs">Major axis (km)</text>
<text x="1062.6" y="310" font-family="Liberation Sans" font-size="23.74" fill="#000" textLength="141.8" lengthAdjust="spacingAndGlyphs">Minor axis (km)</text>
<text x="1100.6" y="352.4" font-family="Liberation Sans" font-size="23.74" fill="#000" textLength="103.8" lengthAdjust="spacingAndGlyphs">Orientation</text>
<rect x="1354" y="144" width="26" height="26" fill="#005fb8" rx="4"/>
<path d="M1361,157 L1365.5,161.5 L1373.5,153" fill="none" stroke="#ffffff" stroke-width="2"/>
<text x="1392.5" y="166" font-family="Liberation Sans" font-size="25.14" fill="#000" textLength="43.0" lengthAdjust="spacingAndGlyphs">4.96</text>
<rect x="1354" y="188" width="26" height="26" fill="#005fb8" rx="4"/>
<path d="M1361,201 L1365.5,205.5 L1373.5,197" fill="none" stroke="#ffffff" stroke-width="2"/>
<text x="1392.5" y="210" font-family="Liberation Sans" font-size="25.14" fill="#000" textLength="61.0" lengthAdjust="spacingAndGlyphs">-41.26</text>
<rect x="1355" y="244" width="24" height="24" fill="#f7f7f7" stroke="#c8c8c8" stroke-width="2" rx="4"/>
<text x="1392.7" y="263" font-family="Liberation Sans" font-size="22.35" fill="#a0a0a0" textLength="42.7" lengthAdjust="spacingAndGlyphs">0.00</text>
<rect x="1355" y="288" width="24" height="24" fill="#f7f7f7" stroke="#c8c8c8" stroke-width="2" rx="4"/>
<text x="1392.7" y="307" font-family="Liberation Sans" font-size="22.35" fill="#a0a0a0" textLength="42.7" lengthAdjust="spacingAndGlyphs">0.00</text>
<rect x="1355" y="332" width="24" height="24" fill="#f7f7f7" stroke="#c8c8c8" stroke-width="2" rx="4"/>
<text x="1392.7" y="351" font-family="Liberation Sans" font-size="22.35" fill="#a0a0a0" textLength="30.7" lengthAdjust="spacingAndGlyphs">0.0</text>
<text x="1475.7" y="167.6" font-family="Liberation Sans" font-size="22.35" fill="#000" textLength="71.7" lengthAdjust="spacingAndGlyphs">Mass X</text>
<text x="1475.7" y="211.6" font-family="Liberation Sans" font-size="22.35" fill="#000" textLength="71.7" lengthAdjust="spacingAndGlyphs">Mass Y</text>
<rect x="1559" y="139" width="113" height="37" fill="#ffffff" stroke="#a6a8ae" stroke-width="2"/>
<rect x="1641" y="142" width="28" height="31" fill="#f7f7f7"/>
<rect x="1641" y="142" width="2" height="31" fill="#d0d0d0"/>
<rect x="1667" y="142" width="2" height="31" fill="#d0d0d0"/>
<rect x="1641" y="156.5" width="28" height="3" fill="#cfcfcf"/>
<rect x="1641" y="171" width="28" height="2" fill="#d0d0d0"/>
<path d="M1649,152.5 L1661,152.5 L1655,146.5 Z" fill="#1a1a1a"/>
<path d="M1649,163.5 L1661,163.5 L1655,169.5 Z" fill="#1a1a1a"/>
<text x="1562.7" y="163" font-family="Liberation Sans" font-size="22.35" fill="#000" textLength="30.7" lengthAdjust="spacingAndGlyphs">0.0</text>
<rect x="1559" y="184" width="113" height="36" fill="#ffffff" stroke="#a6a8ae" stroke-width="2"/>
<rect x="1641" y="187" width="28" height="30" fill="#f7f7f7"/>
<rect x="1641" y="187" width="2" height="30" fill="#d0d0d0"/>
<rect x="1667" y="187" width="2" height="30" fill="#d0d0d0"/>
<rect x="1641" y="201.0" width="28" height="3" fill="#cfcfcf"/>
<rect x="1641" y="215" width="28" height="2" fill="#d0d0d0"/>
<path d="M1649,197.0 L1661,197.0 L1655,191.0 Z" fill="#1a1a1a"/>
<path d="M1649,208.0 L1661,208.0 L1655,214.0 Z" fill="#1a1a1a"/>
<text x="1562.7" y="207" font-family="Liberation Sans" font-size="22.35" fill="#000" textLength="30.7" lengthAdjust="spacingAndGlyphs">0.0</text>
<text x="1541.0" y="239" font-family="Liberation Sans" font-size="16.76" fill="#a0a0a0" font-weight="bold" textLength="91.0" lengthAdjust="spacingAndGlyphs">Shape model</text>
<rect x="1646" y="224" width="23" height="23" fill="#f7f7f7" stroke="#c8c8c8" stroke-width="2" rx="4"/>
<text x="1504.7" y="273" font-family="Liberation Sans" font-size="22.35" fill="#006400" textLength="127.7" lengthAdjust="spacingAndGlyphs">dia = 3.40 km</text>
<text x="1466.7" y="300" font-family="Liberation Sans" font-size="22.35" fill="#0000ff" textLength="205.7" lengthAdjust="spacingAndGlyphs">a/b: 1.00, dMag: 0.00</text>
<text x="1475.6" y="360" font-family="Liberation Sans" font-size="23.74" fill="#000" textLength="177.8" lengthAdjust="spacingAndGlyphs">Motion: 11.76 km/s</text>
<rect x="1022" y="384" width="26" height="26" fill="#005fb8" rx="4"/>
<path d="M1029,397 L1033.5,401.5 L1041.5,393" fill="none" stroke="#ffffff" stroke-width="2"/>
<text x="1059.6" y="406" font-family="Liberation Sans" font-size="23.74" fill="#000" textLength="71.8" lengthAdjust="spacingAndGlyphs">Circular</text>
<rect x="1154" y="384" width="26" height="26" fill="#005fb8" rx="4"/>
<path d="M1161,397 L1165.5,401.5 L1173.5,393" fill="none" stroke="#ffffff" stroke-width="2"/>
<text x="1190.7" y="392" font-family="Liberation Sans" font-size="22.35" fill="#000" textLength="127.7" lengthAdjust="spacingAndGlyphs">Use assumed</text>
<text x="1190.7" y="418" font-family="Liberation Sans" font-size="22.35" fill="#000" textLength="108.7" lengthAdjust="spacingAndGlyphs">dia (3.4 km)</text>
<rect x="1359" y="385" width="24" height="24" fill="#f3f3f3" stroke="#6a6a6a" stroke-width="2" rx="4"/>
<text x="1395.6" y="406" font-family="Liberation Sans" font-size="23.74" fill="#000" textLength="189.8" lengthAdjust="spacingAndGlyphs">Include Miss events</text>
<rect x="1018" y="436" width="644" height="43" fill="#f0f0f0"/>
<rect x="1018" y="436" width="644" height="3" fill="#909090"/>
<rect x="1018" y="436" width="3" height="43" fill="#909090"/>
<rect x="1018" y="477" width="646" height="2" fill="#ffffff"/>
<rect x="1662" y="436" width="2" height="43" fill="#ffffff"/>
<text x="1033.5" y="466" font-family="Liberation Sans" font-size="25.14" fill="#a3a3a3" font-weight="bold" textLength="226.0" lengthAdjust="spacingAndGlyphs">Double stars - show</text>
<circle cx="1299" cy="459" r="12.5" fill="#c8c8c8"/><circle cx="1299" cy="459" r="5" fill="#ffffff"/>
<text x="1321.8" y="468" font-family="Liberation Sans" font-size="19.55" fill="#a3a3a3" textLength="37.3" lengthAdjust="spacingAndGlyphs">Both</text>
<circle cx="1403" cy="459" r="11.5" fill="#f7f7f7" stroke="#cccccc" stroke-width="2"/>
<text x="1425.8" y="468" font-family="Liberation Sans" font-size="19.55" fill="#a3a3a3" textLength="63.3" lengthAdjust="spacingAndGlyphs">Primary</text>
<circle cx="1533" cy="459" r="11.5" fill="#f7f7f7" stroke="#cccccc" stroke-width="2"/>
<text x="1556.8" y="468" font-family="Liberation Sans" font-size="19.55" fill="#a3a3a3" textLength="86.3" lengthAdjust="spacingAndGlyphs">Secondary</text>
<text x="1020.5" y="519" font-family="Liberation Sans" font-size="25.14" fill="#006400" font-weight="bold" textLength="184.0" lengthAdjust="spacingAndGlyphs">Quality of the fit</text>
<rect x="1221" y="491" width="426" height="40" fill="#ffffff" stroke="#7a7a7a" stroke-width="2"/>
<text x="1224.6" y="518" font-family="Liberation Sans" font-size="23.74" fill="#000" textLength="298.8" lengthAdjust="spacingAndGlyphs">Astrometry only. No reliable size</text>
<path d="M1622,506 L1630,514 L1638,506" fill="none" stroke="#404040" stroke-width="2"/>
<rect x="1220" y="538" width="250" height="34" fill="#add8e6"/>
<rect x="1223" y="541" width="23" height="23" fill="#f3f3f3" stroke="#6a6a6a" stroke-width="2" rx="4"/>
<text x="1258.6" y="561.5" font-family="Liberation Sans" font-size="23.74" fill="#000" font-style="italic" textLength="201.8" lengthAdjust="spacingAndGlyphs">Flag for future review</text>
<rect x="1000" y="578" width="678" height="164" fill="#f0ffff"/>
<rect x="1000" y="578" width="678" height="2" fill="#a0a0a0"/>
<rect x="1000" y="578" width="2" height="164" fill="#a0a0a0"/>
<rect x="1002" y="580" width="674" height="2" fill="#696969"/>
<rect x="1002" y="580" width="2" height="160" fill="#696969"/>
<rect x="1676" y="580" width="2" height="162" fill="#e3e3e3"/>
<rect x="1002" y="740" width="676" height="2" fill="#e3e3e3"/>
<text x="1016.4" y="631.6" font-family="Liberation Sans" font-size="25.98" fill="#6b0035" font-weight="bold" textLength="17.1" lengthAdjust="spacingAndGlyphs">P</text>
<text x="1016.5" y="657.7" font-family="Liberation Sans" font-size="24.72" fill="#6b0035" font-weight="bold" textLength="17.0" lengthAdjust="spacingAndGlyphs">L</text>
<text x="1016.5" y="683.7" font-family="Liberation Sans" font-size="24.72" fill="#6b0035" font-weight="bold" textLength="17.0" lengthAdjust="spacingAndGlyphs">O</text>
<text x="1016.5" y="709.8" font-family="Liberation Sans" font-size="24.3" fill="#6b0035" font-weight="bold" textLength="16.9" lengthAdjust="spacingAndGlyphs">T</text>
<text x="1056.5" y="623.8" font-family="Liberation Sans" font-size="24.44" fill="#6b0035" font-weight="bold" textLength="64.9" lengthAdjust="spacingAndGlyphs">Scale</text>
<rect x="1134" y="596" width="538" height="38" fill="#fff8cc"/>
<rect x="1144" y="606" width="516" height="7" fill="#e6e6e6" stroke="#cfcfcf" stroke-width="1.5"/>
<rect x="1150" y="626" width="2" height="8" fill="#a8a8a8"/>
<rect x="1176" y="628" width="2" height="6" fill="#a8a8a8"/>
<rect x="1200" y="628" width="2" height="6" fill="#a8a8a8"/>
<rect x="1226" y="628" width="2" height="6" fill="#a8a8a8"/>
<rect x="1250" y="628" width="2" height="6" fill="#a8a8a8"/>
<rect x="1276" y="628" width="2" height="6" fill="#a8a8a8"/>
<rect x="1302" y="628" width="2" height="6" fill="#a8a8a8"/>
<rect x="1326" y="628" width="2" height="6" fill="#a8a8a8"/>
<rect x="1352" y="628" width="2" height="6" fill="#a8a8a8"/>
<rect x="1376" y="628" width="2" height="6" fill="#a8a8a8"/>
<rect x="1402" y="628" width="2" height="6" fill="#a8a8a8"/>
<rect x="1428" y="628" width="2" height="6" fill="#a8a8a8"/>
<rect x="1452" y="628" width="2" height="6" fill="#a8a8a8"/>
<rect x="1478" y="628" width="2" height="6" fill="#a8a8a8"/>
<rect x="1502" y="628" width="2" height="6" fill="#a8a8a8"/>
<rect x="1528" y="628" width="2" height="6" fill="#a8a8a8"/>
<rect x="1554" y="628" width="2" height="6" fill="#a8a8a8"/>
<rect x="1578" y="628" width="2" height="6" fill="#a8a8a8"/>
<rect x="1604" y="628" width="2" height="6" fill="#a8a8a8"/>
<rect x="1628" y="628" width="2" height="6" fill="#a8a8a8"/>
<rect x="1654" y="626" width="2" height="8" fill="#a8a8a8"/>
<path d="M1396,602 L1408,602 L1408,616 L1402,622 L1396,616 Z" fill="#0078d7"/>
<text x="1056.5" y="676" font-family="Liberation Sans" font-size="24.44" fill="#6b0035" font-weight="bold" textLength="48.9" lengthAdjust="spacingAndGlyphs">Size</text>
<rect x="1116" y="646" width="325" height="46" fill="#f0fff0"/>
<rect x="1116" y="646" width="325" height="2" fill="#7a7a7a"/>
<rect x="1116" y="646" width="2" height="46" fill="#7a7a7a"/>
<rect x="1439" y="646" width="2" height="46" fill="#e3e3e3"/>
<rect x="1116" y="690" width="325" height="2" fill="#e3e3e3"/>
<circle cx="1149" cy="668.5" r="12.5" fill="#005fb8"/>
<circle cx="1149" cy="668.5" r="5.5" fill="#ffffff"/>
<text x="1174.6" y="678" font-family="Liberation Sans" font-size="23.74" fill="#6b0035" font-weight="bold" textLength="74.8" lengthAdjust="spacingAndGlyphs">normal</text>
<circle cx="1277" cy="668.5" r="11.5" fill="#f3f3f3" stroke="#777777" stroke-width="2"/>
<text x="1301.6" y="678" font-family="Liberation Sans" font-size="23.74" fill="#6b0035" font-weight="bold" textLength="35.8" lengthAdjust="spacingAndGlyphs">x 2</text>
<circle cx="1365" cy="668.5" r="11.5" fill="#f3f3f3" stroke="#777777" stroke-width="2"/>
<text x="1390.6" y="678" font-family="Liberation Sans" font-size="23.74" fill="#6b0035" font-weight="bold" textLength="35.8" lengthAdjust="spacingAndGlyphs">x 5</text>
<text x="1485.5" y="678" font-family="Liberation Sans" font-size="25.14" fill="#800080" font-weight="bold" textLength="146.0" lengthAdjust="spacingAndGlyphs">Form opacity</text>
<rect x="1444" y="692" width="230" height="42" fill="#fff8cc"/>
<rect x="1456" y="704" width="205" height="7" fill="#e6e6e6" stroke="#cfcfcf" stroke-width="1.5"/>
<rect x="1464" y="726" width="2" height="8" fill="#a8a8a8"/>
<rect x="1502" y="728" width="2" height="6" fill="#a8a8a8"/>
<rect x="1540" y="728" width="2" height="6" fill="#a8a8a8"/>
<rect x="1576" y="728" width="2" height="6" fill="#a8a8a8"/>
<rect x="1614" y="728" width="2" height="6" fill="#a8a8a8"/>
<rect x="1652" y="726" width="2" height="8" fill="#a8a8a8"/>
<path d="M1644,696 L1660,696 L1660,714 L1652,721 L1644,714 Z" fill="#0078d7"/>
<text x="1057.5" y="728" font-family="Liberation Sans" font-size="25.14" fill="#800000" font-weight="bold" textLength="208.0" lengthAdjust="spacingAndGlyphs">Scroll range x1.25</text>
<rect x="1282" y="707" width="23" height="23" fill="#f3f3f3" stroke="#6a6a6a" stroke-width="2" rx="4"/>
<text x="1027.5" y="786" font-family="Liberation Sans" font-size="25.14" fill="#000" textLength="190.0" lengthAdjust="spacingAndGlyphs">RMS fit 0.1 ±0.0 km</text>
<rect x="1012" y="804" width="654" height="202" fill="#f0f0f0"/>
<rect x="1012" y="804" width="654" height="2" fill="#a0a0a0"/>
<rect x="1012" y="804" width="2" height="202" fill="#a0a0a0"/>
<rect x="1014" y="806" width="650" height="2" fill="#696969"/>
<rect x="1014" y="806" width="2" height="198" fill="#696969"/>
<rect x="1664" y="806" width="2" height="200" fill="#ffffff"/>
<rect x="1012" y="1004" width="654" height="2" fill="#ffffff"/>
<rect x="1016" y="808" width="616" height="164" fill="#ffffff"/>
<circle cx="1031" cy="823" r="2.5" fill="#333"/>
<circle cx="1061" cy="823" r="2.5" fill="#333"/>
<circle cx="1091" cy="823" r="2.5" fill="#333"/>
<circle cx="1121" cy="823" r="2.5" fill="#333"/>
<circle cx="1151" cy="823" r="2.5" fill="#333"/>
<rect x="1026" y="844" width="132" height="3" fill="#ff0000"/>
<text x="1204" y="832" font-family="Liberation Mono" font-size="26" fill="#000" textLength="231" lengthAdjust="spacingAndGlyphs">1(P) Predicted</text>
<text x="1204" y="856" font-family="Liberation Mono" font-size="26" fill="#000" textLength="429" lengthAdjust="spacingAndGlyphs">2    Hidehito Yamamura, ne</text>
<rect x="1646" y="842" width="4" height="70" fill="#888888"/>
<rect x="1050" y="986" width="380" height="4" fill="#888888"/>
</svg>
</body></html>
